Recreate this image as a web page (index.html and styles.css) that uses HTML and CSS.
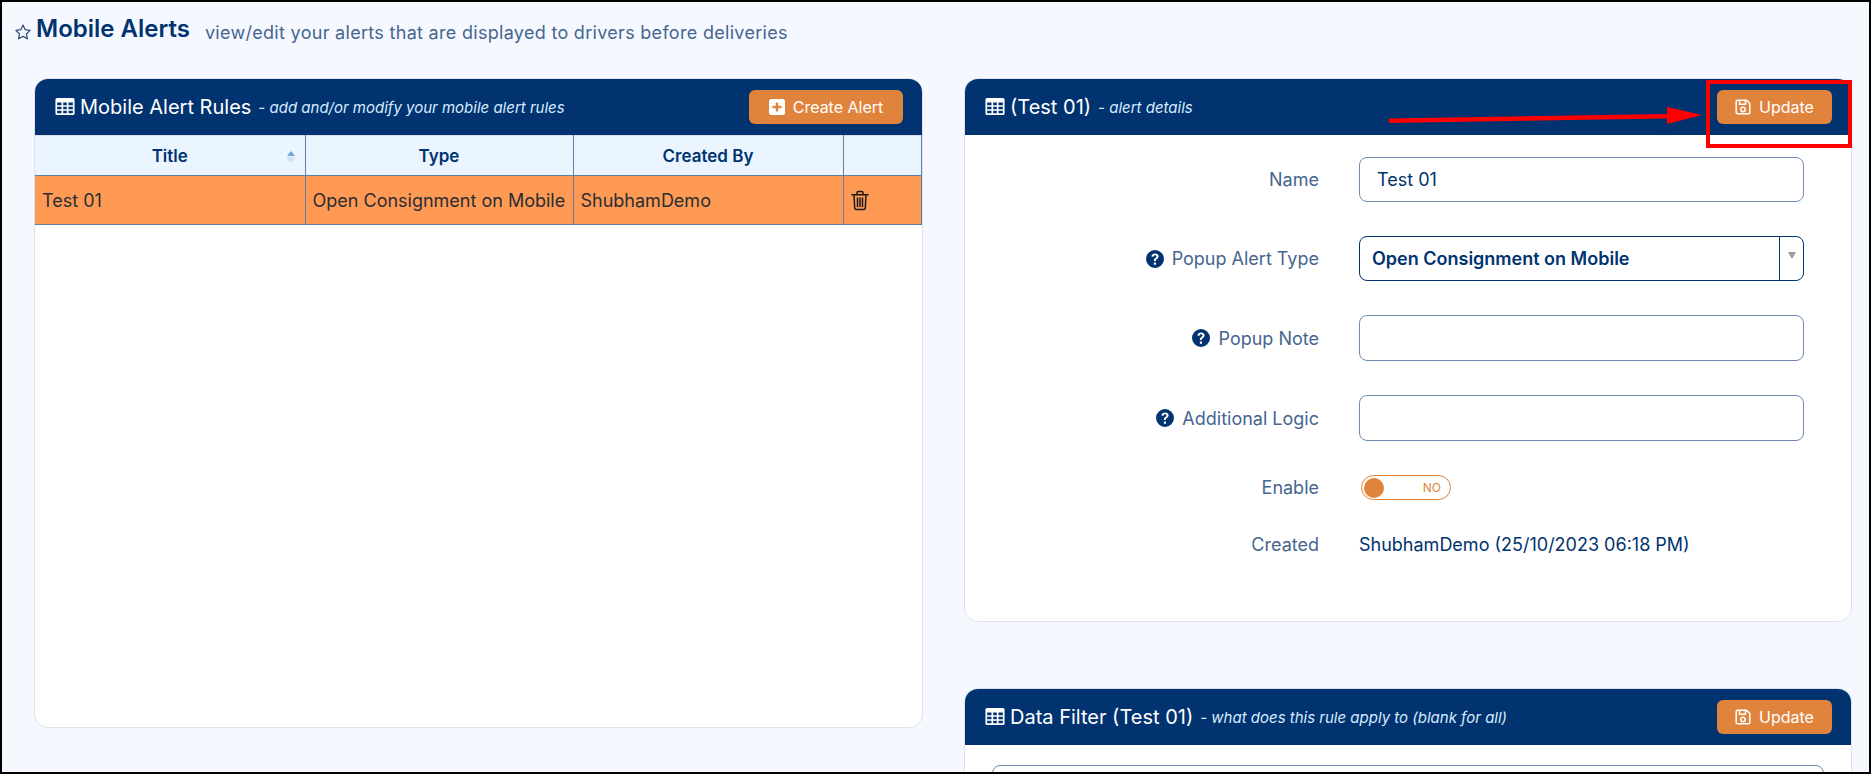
FILE: index.html
```html
<!DOCTYPE html>
<html lang="en">
<head>
<meta charset="utf-8">
<title>Mobile Alerts</title>
<link rel="stylesheet" href="styles.css">
</head>
<body>
<svg class="defs" width="0" height="0" aria-hidden="true">
  <symbol id="i-table" viewBox="0 0 18 16">
    <path fill-rule="evenodd" d="M1.5 0h15A1.5 1.5 0 0 1 18 1.5v13a1.500 1.500 0 0 1-1.500 1.500h-15A1.500 1.500 0 0 1 0 14.500v-13A1.500 1.500 0 0 1 1.500 0zM1.600 4.200v2.600h4.100V4.200zm5.700 0v2.600h3.400V4.200zm5 0v2.600h4.100V4.200zM1.600 8.200v2.500h4.100V8.200zm5.700 0v2.500h3.400V8.200zm5 0v2.500h4.100V8.200zM1.600 12.100v2.300h4.100v-2.300zm5.700 0v2.300h3.400v-2.300zm5 0v2.300h4.100v-2.300z"/>
  </symbol>
  <symbol id="i-save" viewBox="0 0 16 16">
    <path fill="none" stroke="currentColor" stroke-width="1.500" stroke-linejoin="round" d="M2.200 1.200h9.300l3.300 3.300v9a1.300 1.300 0 0 1-1.300 1.300H2.500a1.300 1.300 0 0 1-1.300-1.300V2.500a1.300 1.300 0 0 1 1-1.300z"/>
    <path fill="none" stroke="currentColor" stroke-width="1.500" d="M4.500 1.500v3.700h6V1.500"/>
    <circle cx="8" cy="10.500" r="2.200" fill="none" stroke="currentColor" stroke-width="1.500"/>
  </symbol>
  <symbol id="i-help" viewBox="0 0 16 16">
    <path fill-rule="evenodd" d="M8 0a8 8 0 1 1 0 16A8 8 0 0 1 8 0zm.9 11.200H7v2h1.900zM8.100 3C6.300 3 5 4 4.800 5.800l1.900.3c.1-.9.600-1.400 1.400-1.400.7 0 1.200.4 1.200 1 0 .5-.3.800-1 1.300-.9.600-1.300 1.200-1.300 2.200v.5h1.800v-.3c0-.5.200-.8.900-1.300 1-.7 1.500-1.400 1.500-2.500C11.200 4 9.900 3 8.100 3z"/>
  </symbol>
</svg>

<div class="frame">
  <header class="page-head">
    <svg class="star" viewBox="0 0 24 24"><path d="M12 2.800l2.900 6.100 6.600.9-4.800 4.600 1.200 6.600L12 17.800 6.100 21l1.200-6.600L2.500 9.800l6.600-.9z"/></svg>
    <h1>Mobile Alerts</h1>
    <span class="page-sub">view/edit your alerts that are displayed to drivers before deliveries</span>
  </header>

  <main class="columns">
    <section class="card card-rules">
      <div class="card-head">
        <svg class="ico-table"><use href="#i-table"/></svg>
        <h2>Mobile Alert Rules</h2>
        <em>- add and/or modify your mobile alert rules</em>
        <button class="btn btn-create" type="button">
          <svg class="ico-btn" viewBox="0 0 16 16"><path fill-rule="evenodd" d="M2.500 0h11A2.500 2.500 0 0 1 16 2.500v11a2.500 2.500 0 0 1-2.500 2.500h-11A2.500 2.500 0 0 1 0 13.500v-11A2.500 2.500 0 0 1 2.500 0zM6.800 3.500v3.300H3.500v2.400h3.300v3.300h2.400V9.200h3.300V6.800H9.200V3.500z"/></svg>
          Create Alert
        </button>
      </div>
      <table class="rules">
        <colgroup><col class="c1"><col class="c2"><col class="c3"><col class="c4"></colgroup>
        <thead>
          <tr>
            <th class="sorted">Title<span class="sort"></span></th>
            <th>Type</th>
            <th>Created By</th>
            <th></th>
          </tr>
        </thead>
        <tbody>
          <tr>
            <td>Test 01</td>
            <td><div class="clip">Open Consignment on Mobile</div></td>
            <td>ShubhamDemo</td>
            <td class="cell-del">
              <svg class="trash" viewBox="0 0 18 20"><path d="M1 4.200h16M6 4V2.300C6 1.600 6.500 1 7.300 1h3.400c.8 0 1.300.6 1.300 1.300V4M3 4.500l.7 12.900c.1.900.7 1.600 1.600 1.600h7.400c.9 0 1.500-.7 1.600-1.600L15 4.500M6.500 7.500v8.500M9 7.500v8.500M11.500 7.500v8.500"/></svg>
            </td>
          </tr>
        </tbody>
      </table>
    </section>

    <div class="stack">
      <section class="card card-detail">
        <div class="card-head">
          <svg class="ico-table"><use href="#i-table"/></svg>
          <h2>(Test 01)</h2>
          <em>- alert details</em>
          <button class="btn btn-update" type="button"><svg class="ico-btn"><use href="#i-save"/></svg>Update</button>
        </div>
        <form class="form">
          <label class="lbl l-name">Name</label>
          <input class="field" type="text" value="Test 01">
          <label class="lbl l-type"><svg class="ico-help"><use href="#i-help"/></svg>Popup Alert Type</label>
          <div class="select"><span>Open Consignment on Mobile</span><i class="caret"></i></div>
          <label class="lbl l-note"><svg class="ico-help"><use href="#i-help"/></svg>Popup Note</label>
          <input class="field" type="text">
          <label class="lbl l-logic"><svg class="ico-help"><use href="#i-help"/></svg>Additional Logic</label>
          <input class="field" type="text">
          <label class="lbl l-enable">Enable</label>
          <div class="toggle"><span class="knob"></span><span class="no">NO</span></div>
          <label class="lbl l-created">Created</label>
          <div class="created">ShubhamDemo (25/10/2023 06:18 PM)</div>
        </form>
      </section>

      <section class="card card-filter">
        <div class="card-head">
          <svg class="ico-table"><use href="#i-table"/></svg>
          <h2>Data Filter (Test 01)</h2>
          <em>- what does this rule apply to (blank for all)</em>
          <button class="btn btn-update" type="button"><svg class="ico-btn"><use href="#i-save"/></svg>Update</button>
        </div>
        <div class="filter-body"><div class="filter-box"></div></div>
      </section>
    </div>
  </main>

  <div class="callout"></div>
  <svg class="arrow" viewBox="0 0 330 30" aria-hidden="true">
    <defs><filter id="blur" x="-5%" y="-50%" width="110%" height="220%"><feGaussianBlur stdDeviation="2"/></filter></defs>
    <path class="arrow-shadow" filter="url(#blur)" d="M6 16l270-4V6l36 8-36 14v-8L6 20z"/>
    <path class="arrow-head" d="M2 12.500L280 8V1l35 8-35 9v-5.500L2 17z"/>
  </svg>
</div>
</body>
</html>
```

FILE: styles.css
```css
* { box-sizing: border-box; }

html, body {
  margin: 0;
  height: 100%;
  overflow: hidden;
}

body {
  font-family: Inter, "Liberation Sans", sans-serif;
  color: #00336f;
  background: #000;
}

.defs { position: absolute; }

.frame {
  position: relative;
  width: 1871px;
  height: 774px;
  border: solid #000;
  border-width: 2px 2px 2px 2px;
  background: #f5f9ff;
  overflow: hidden;
}

/* page heading */
.page-head {
  display: flex;
  align-items: center;
  height: 54px;
  padding-left: 12px;
}

.star {
  width: 18px;
  height: 18px;
  margin-top: 6px;
  fill: none;
  stroke: #33507a;
  stroke-width: 1.700;
  stroke-linejoin: round;
}

h1 {
  margin: 0 0 0 4px;
  font-size: 24px;
  line-height: 30px;
  font-weight: 600;
  color: #00336f;
}

.page-sub {
  margin: 6px 0 0 15px;
  font-size: 18px;
  letter-spacing: 0.300px;
  color: #46658f;
}

/* columns */
.columns {
  display: grid;
  grid-template-columns: 889px 888px;
  column-gap: 41px;
  margin-top: 22px;
  padding-left: 32px;
  align-items: start;
}

.stack {
  display: flex;
  flex-direction: column;
  gap: 66px;
}

.card {
  background: #fff;
  border: 1px solid #dde2e8;
  border-radius: 14px;
  overflow: hidden;
}

.card-rules { height: 650px; }
.card-detail { height: 544px; }

.card-head {
  display: flex;
  align-items: center;
  height: 57px;
  margin: -1px -1px 0;
  padding: 0 20px 0 21px;
  background: #00336f;
  color: #fff;
}

.card-head h2 {
  margin: 0 0 0 5px;
  font-size: 20px;
  font-weight: 400;
  line-height: 26px;
}

.card-head em {
  margin: 2px 0 0 7px;
  font-size: 15px;
  color: #d8ebff;
}

.ico-table {
  width: 20px;
  height: 17px;
  fill: #fff;
}

.btn {
  display: flex;
  align-items: center;
  justify-content: center;
  gap: 8px;
  height: 34px;
  margin-left: auto;
  border: 0;
  border-radius: 6px;
  background: #e0843d;
  color: #fff;
  font: 400 16px Inter, "Liberation Sans", sans-serif;
}

.btn-create { width: 154px; }
.btn-update { width: 115px; }

.ico-btn {
  width: 16px;
  height: 16px;
  fill: #fff;
  color: #fff;
}

/* table */
.rules {
  width: 100%;
  table-layout: fixed;
  border-collapse: collapse;
  font-size: 18px;
  border-top: 1px solid #dde2e8;
}

.c1 { width: 270px; }
.c2 { width: 268px; }
.c3 { width: 270px; }

.rules th, .rules td {
  border: 1px solid #5f7fa8;
  border-top: 0;
}

.rules th {
  position: relative;
  height: 40px;
  background: #eaf5ff;
  font-size: 17px;
  font-weight: 600;
  color: #00336f;
  text-align: center;
}

.rules th:first-child, .rules td:first-child { border-left: 0; }
.rules th:last-child, .rules td:last-child { border-right-color: #5f7fa8; }

.sort {
  position: absolute;
  top: 15px;
  right: 10px;
  width: 0;
  height: 0;
  border: 4px solid transparent;
  border-top: 0;
  border-bottom: 5px solid #6fa8dc;
}

.sort::after {
  content: "";
  position: absolute;
  top: 6px;
  left: -4px;
  width: 8px;
  height: 5px;
  border-radius: 0 0 4px 4px;
  background: #d4e4f3;
}

.rules td {
  height: 49px;
  padding: 0 7px;
  background: #ff9a55;
  color: #2a2d33;
  font-weight: 400;
  white-space: nowrap;
}

.clip { overflow: hidden; }
.cell-del { padding-left: 12px; }

.trash {
  display: block;
  width: 18px;
  height: 21px;
  fill: none;
  stroke: #1a1a1a;
  stroke-width: 1.500;
  stroke-linecap: round;
}

/* form */
.form {
  display: grid;
  grid-template-columns: 354px 445px;
  column-gap: 40px;
  grid-template-rows: 45px 45px 46px 46px 25px auto;
  row-gap: 34px;
  padding-top: 22px;
  align-items: center;
}

.lbl {
  display: flex;
  align-items: center;
  justify-content: flex-end;
  gap: 8px;
  font-size: 18px;
  color: #46658f;
}

.ico-help {
  width: 18px;
  height: 18px;
  fill: #00336f;
}

.field {
  width: 100%;
  height: 100%;
  padding: 0 17px;
  border: 1px solid #6e8bb3;
  border-radius: 8px;
  background: #fff;
  font: 400 18px Inter, "Liberation Sans", sans-serif;
  color: #00336f;
}

.select {
  display: flex;
  align-items: center;
  height: 100%;
  padding-left: 12px;
  border: 1px solid #00336f;
  border-radius: 8px;
  font-size: 18px;
  font-weight: 600;
  color: #00336f;
}

.select span { flex: 1; }

.caret {
  position: relative;
  align-self: stretch;
  width: 24px;
  border-left: 1px solid #00336f;
}

.caret::after {
  content: "";
  position: absolute;
  top: 15px;
  left: 8px;
  border: 4px solid transparent;
  border-bottom: 0;
  border-top: 7px solid #9a9a9a;
}

.toggle {
  position: relative;
  display: flex;
  align-items: center;
  justify-content: flex-end;
  width: 90px;
  height: 25px;
  margin-left: 2px;
  padding-right: 9px;
  border: 1px solid #e0843d;
  border-radius: 13px;
}

.knob {
  position: absolute;
  top: 2px;
  left: 2px;
  width: 20px;
  height: 20px;
  border-radius: 50%;
  background: #e0843d;
}

.no {
  font-size: 12px;
  color: #e0843d;
}

.created {
  font-size: 18px;
  color: #00336f;
}

/* second card */
.filter-body {
  padding: 20px 27px;
}

.filter-box {
  height: 100px;
  border: 1px solid #6e8bb3;
  border-radius: 8px;
}

/* annotation */
.callout {
  position: absolute;
  top: 78px;
  left: 1704px;
  width: 146px;
  height: 68px;
  border: 4px solid #ff0000;
}

.arrow {
  position: absolute;
  top: 104px;
  left: 1385px;
  width: 330px;
  height: 30px;
}

.arrow-head { fill: #f00; }
.arrow-shadow { fill: #00336f; opacity: 0.500; }
```
